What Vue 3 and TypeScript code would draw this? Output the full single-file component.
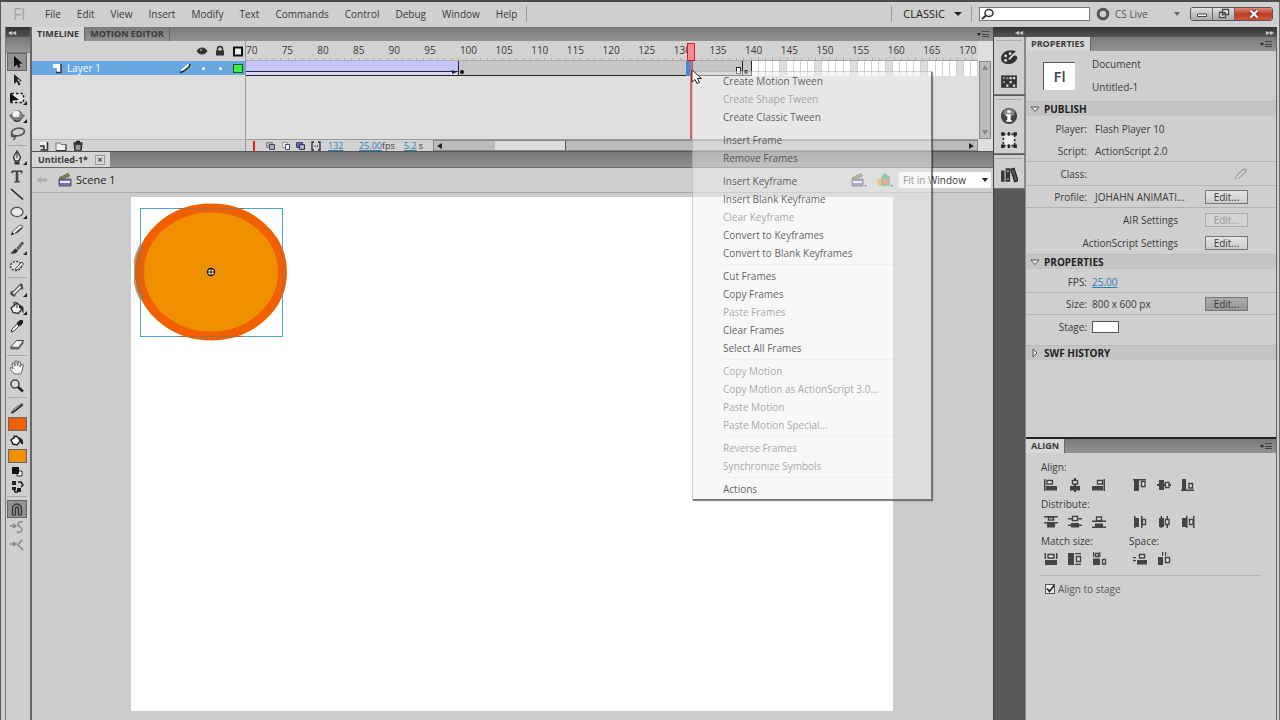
<script setup lang="ts">
import { ref } from 'vue'

interface MenuEntry { label: string; off?: boolean }
interface Tool { name: string; art: string; active?: boolean; more?: boolean }

const menus: string[] = ['File', 'Edit', 'View', 'Insert', 'Modify', 'Text', 'Commands', 'Control', 'Debug', 'Window', 'Help']

const ruler: number[] = Array.from({ length: 21 }, (_, i) => 70 + i * 5)

const contextMenu: MenuEntry[][] = [
  [{ label: 'Create Motion Tween' }, { label: 'Create Shape Tween', off: true }, { label: 'Create Classic Tween' }],
  [{ label: 'Insert Frame' }, { label: 'Remove Frames' }],
  [
    { label: 'Insert Keyframe' },
    { label: 'Insert Blank Keyframe' },
    { label: 'Clear Keyframe', off: true },
    { label: 'Convert to Keyframes' },
    { label: 'Convert to Blank Keyframes' },
  ],
  [
    { label: 'Cut Frames' },
    { label: 'Copy Frames' },
    { label: 'Paste Frames', off: true },
    { label: 'Clear Frames' },
    { label: 'Select All Frames' },
  ],
  [
    { label: 'Copy Motion', off: true },
    { label: 'Copy Motion as ActionScript 3.0...', off: true },
    { label: 'Paste Motion', off: true },
    { label: 'Paste Motion Special...', off: true },
  ],
  [{ label: 'Reverse Frames', off: true }, { label: 'Synchronize Symbols', off: true }],
  [{ label: 'Actions' }],
]

const toolGroups: Tool[][] = [
  [
    { name: 'Selection', active: true, art: '<path d="M5 2v11l3-2.500 1.500 3.500 2-1-1.500-3.200 3.500-.3z" fill="#111"/>' },
    { name: 'Subselection', art: '<path d="M5 2v10l3-2.500 1.500 4 2-1-1.500-3.200 3-.3z" fill="#222"/><path d="M8.500 6.500l2.500 2.300-2 .2z" fill="#fff"/>' },
    { name: 'Free transform', more: true, art: '<path d="M2.500 3.500h12v9h-12z" fill="#e4e4e4" stroke="#222" stroke-width="1.500" stroke-dasharray="2.500 2"/><path d="M1 3v10l3-2.500 6-.5z" fill="#111"/>' },
    { name: '3D rotation', more: true, art: '<circle cx="8" cy="8" r="5.500" fill="#8a8a8a" stroke="#666"/><circle cx="7" cy="6" r="3.500" fill="#f4f4f4"/><path d="M1 6.500c0 5 14 5 14 0" fill="none" stroke="#777" stroke-width="1.800"/><path d="M5 12c2 2 5 1.500 6.500-.5" fill="none" stroke="#333" stroke-width="1.200"/>' },
    { name: 'Lasso', art: '<ellipse cx="9" cy="6" rx="6.500" ry="3.800" fill="none" stroke="#555" stroke-width="1.700" transform="rotate(-10 9 6)"/><path d="M3.500 8c-2 1-1 3 1 2.500s2 1.500 0 3.500" fill="none" stroke="#444" stroke-width="1.400"/>' },
  ],
  [
    { name: 'Pen', more: true, art: '<path d="M8 1l3.500 6-1.500 4h-4l-1.500-4z" fill="#ddd" stroke="#333" stroke-width="1.300"/><path d="M8 2v6" stroke="#222"/><path d="M5.500 12h5v2.500h-5z" fill="#333"/>' },
    { name: 'Text', art: '<path d="M2.500 2.500h11v3h-1.200l-.8-1.500h-2.200v9l1.700.5v1h-6v-1l1.700-.5v-9h-2.200l-.8 1.500h-1.200z" fill="#444"/>' },
    { name: 'Line', art: '<path d="M2 3l12 10.500" stroke="#222" stroke-width="1.500"/>' },
    { name: 'Oval', more: true, art: '<ellipse cx="8" cy="8" rx="6" ry="4.600" fill="#e8e8e8" stroke="#555" stroke-width="1.300"/>' },
    { name: 'Pencil', art: '<path d="M2 13l2-4 7-6 3 1-1 2-8 6z" fill="#eee" stroke="#666"/><path d="M2 13l3-1-1.500-2z" fill="#222"/><path d="M7 11l6-5" stroke="#333" stroke-width="1.500"/>' },
    { name: 'Brush', more: true, art: '<path d="M8 8l5-6 1.500 1-5 6.500z" fill="#777" stroke="#444"/><path d="M1 13c3 0 3-4 6-4.500l2 2c-1 3-5 4-8 2.500z" fill="#333"/>' },
    { name: 'Deco', art: '<ellipse cx="7" cy="8" rx="5.500" ry="4.500" fill="#ddd" stroke="#444" stroke-width="1.500" stroke-dasharray="2 1.300"/><path d="M6 11l7-7 1.500 2-6 6z" fill="#eee" stroke="#444"/>' },
  ],
  [
    { name: 'Bone', more: true, art: '<path d="M4 12l7-7" stroke="#444" stroke-width="4" stroke-linecap="round"/><circle cx="12" cy="3.500" r="2" fill="#555"/><circle cx="13" cy="6" r="1.500" fill="#555"/><circle cx="3" cy="11" r="2" fill="#555"/><circle cx="5" cy="13" r="1.700" fill="#555"/><path d="M4.500 11.500l7-7" stroke="#eee" stroke-width="2"/>' },
    { name: 'Paint bucket', more: true, art: '<path d="M2 8l6-5 6 5-5 5.500-5-1z" fill="#eee" stroke="#333" stroke-width="1.300"/><path d="M5 7V2l3 1v5" fill="none" stroke="#333"/><path d="M10 5c4 0 5 3 4.500 8-2-1-1-4-4.500-5z" fill="#333"/>' },
    { name: 'Eyedropper', art: '<path d="M2 14l1-3 5-5 2 2-5 5z" fill="#eee" stroke="#444"/><path d="M7.500 5l3.500-3 3 0 0 3-3 3.500z" fill="#222"/>' },
    { name: 'Eraser', art: '<path d="M1.500 11l6-6.500h7l-5 7z" fill="#eee" stroke="#444"/><path d="M1.500 11h8v2.500h-8zM9.500 13.500l5-6v-3l-5 7z" fill="#666"/>' },
  ],
  [
    { name: 'Hand', art: '<path d="M5 14c-1-2-4-4-4-6 1-1 2 0 3 1l-1-6 2 0 1 3 0-5h2l.5 5 1-4.500 2 .5-.5 5 2-3 1.500 1c-1 3-1 6-3 9z" fill="#f3f3f3" stroke="#666"/>' },
    { name: 'Zoom', art: '<circle cx="6" cy="6" r="4" fill="#ddd" stroke="#444" stroke-width="1.500"/><path d="M9 9l5 4.500" stroke="#222" stroke-width="2.500"/>' },
  ],
]

const tailTools: Tool[] = [
  { name: 'Snap to objects', active: true, art: '<path d="M3.500 14V8a4.500 5 0 019 0v6M6.500 14V8a1.500 2 0 013 0v6" fill="none" stroke="#333" stroke-width="1.300"/><path d="M3 14h4M9 14h4" stroke="#333"/>' },
  { name: 'Smooth', art: '<path d="M1 7h6M4 5l3 2-3 2M14 3c-6-1-6 3-3 5s3 6-3 5" fill="none" stroke="#888" stroke-width="1.500"/>' },
  { name: 'Straighten', art: '<path d="M1 7h6M4 5l3 2-3 2M13 3l-4 5 5 5" fill="none" stroke="#888" stroke-width="1.500"/>' },
]

const strokeTool = '<path d="M2 13l3-4 7-5 2 0-1 2-8 6z" fill="#eee" stroke="#444"/><path d="M3 13l10-8" stroke="#222" stroke-width="1.500"/>'
const fillTool = '<path d="M2 8l5-4 5 4-4 5-4-1z" fill="#fff" stroke="#222" stroke-width="1.500"/><path d="M5 7V3M10 6c3 0 4 3 3.500 6-2 0-1-3-3.500-4z" stroke="#222" fill="#222"/>'
const defaultColors = '<path d="M8 7h5v5h-5z" fill="#fff" stroke="#333"/><path d="M3 3h7v7h-7z" fill="#111"/>'
const swapColors = '<path d="M3 2h4v4h-4zM8 9h4v4h-4zM3 8h4v3h-4z" fill="#222"/><path d="M9 3h3l2 3-2 2M5 10l1 3h3" fill="none" stroke="#222" stroke-width="1.500"/>'

const docks: { name: string; art: string }[][] = [
  [
    { name: 'Color', art: '<path d="M1 9c0-4 4-7 9-7 5 0 6 3 2 4.500 4 0 4 3 2 5-3 4-13 4-13-2.500z" fill="#333"/><circle cx="5" cy="7" r="1.300" fill="#ddd"/><circle cx="9" cy="5" r="1.300" fill="#ddd"/><circle cx="5" cy="11" r="1.300" fill="#ddd"/><path d="M8 10l6-6" stroke="#eee" stroke-width="1.500"/>' },
    { name: 'Swatches', art: '<path d="M1 3h14v11h-14z" fill="#333"/><path d="M2.500 4.500h2v2h-2zM5.500 4.500h2v2h-2zM2.500 8h2v2h-2z" fill="#888"/><path d="M8.500 4.500h2v2h-2zM11.500 4.500h2v2h-2zM8.500 8h2v2h-2zM5.500 11h2v2h-2zM11.500 11h2v2h-2z" fill="#ddd"/>' },
  ],
  [
    { name: 'Info', art: '<circle cx="8" cy="8" r="7.200" fill="#444"/><ellipse cx="8" cy="5" rx="5" ry="3.500" fill="#888"/><path d="M6.500 3h3v2h-3zM5.500 6.500h4v5h1v1.500h-5v-1.500h1v-3.500h-1z" fill="#fff"/>' },
    { name: 'Transform', art: '<path d="M3 3h10v10h-10z" fill="#eee" stroke="#333" stroke-width="1.500" stroke-dasharray="2 1.500"/><path d="M1 1h3v3h-3zM12 1h3v3h-3zM1 12h3v3h-3zM12 12h3v3h-3zM7 1h2v3h-2zM7 12h2v3h-2z" fill="#222"/>' },
  ],
  [{ name: 'Library', art: '<path d="M1 4h3v10h-3zM5 2h4v12h-4z" fill="#333"/><path d="M9.500 3l3-1 3.500 11-3 1z" fill="#555" stroke="#222"/><path d="M6 4.500h2M6 11.500h2" stroke="#bbb"/>' }],
]

/* Alignment glyphs: one hollow and one solid block against a guide line */
const solid = (d: string) => `<path d="${d}" fill="#444"/>`
const hollow = (d: string) => `<path d="${d}" fill="#e4e4e4" stroke="#444" stroke-width="1.400"/>`
const glyph = {
  left: solid('M1 2h1.500v12h-1.500zM3 9h11v4.500h-11z') + hollow('M4 3.500h5.500v3.500h-5.500z'),
  center: solid('M7 1h2v14h-2zM3 9h10v4.500h-10z') + hollow('M5.500 3.500h5v3.500h-5z'),
  right: solid('M12.500 2h1.500v12h-1.500zM1 9h11v4.500h-11z') + hollow('M6.500 3.500h5v3.500h-5z'),
  top: solid('M1 2h13v1.500h-13zM2 3h5v11h-5z') + hollow('M9.500 4.500h3.500v5h-3.500z'),
  middle: solid('M1 7h14v2h-14zM3 3h5v10h-5z') + hollow('M9.500 5.500h3.500v5h-3.500z'),
  bottom: solid('M1 12.500h13v1.500h-13zM2 2h4v11h-4z') + hollow('M9 6.500h3.500v4.500h-3.500z'),
  dTop: solid('M1 2h14v1.500h-14zM1 8h14v1.500h-14zM4 9h8v4.500h-8z') + hollow('M5.500 3.500h5v2.500h-5z'),
  dMid: solid('M1 4h4v1.500h-4zM11 4h4v1.500h-4zM1 10.500h14v1.500h-14zM4 9h8v4.500h-8z') + hollow('M5.500 2.500h5v4h-5z'),
  dBot: solid('M1 6.500h14v1.500h-14zM1 12.500h14v1.500h-14zM4 9.500h8v4h-8z') + hollow('M5.500 3h5v3.500h-5z'),
  dLeft: solid('M2 2h1.500v12h-1.500zM3 4h4v9h-4zM9 2h1.500v12h-1.500z') + hollow('M10.500 5.500h3v5h-3z'),
  dCen: solid('M4.500 2h1.500v12h-1.500zM3 4h5v9h-5zM10.500 2h1.500v12h-1.500z') + hollow('M9.500 5.500h3.500v5h-3.500z'),
  dRight: solid('M6 2h1.500v12h-1.500zM2 4h4v9h-4zM13 2h1.500v12h-1.500z') + hollow('M9.500 5.500h3.500v5h-3.500z'),
  mW: solid('M1.500 2h1.500v6h-1.500zM13 2h1.500v6h-1.500zM2 9h12v5h-12z') + hollow('M5 3.500h6v3.500h-6z'),
  mH: solid('M1 2h6v12h-6zM8 2h6v1.200h-6zM8 12.800h6v1.200h-6z') + hollow('M9.500 5.500h4v5h-4z'),
  mB: solid('M2 7.500h7v6.500h-7zM2 1h1.200v5h-1.200zM8.300 1h1.200v5h-1.200z') + hollow('M4.500 2.500h3v3h-3zM11.500 8.500h3v4.500h-3z'),
  sV: solid('M5 9h10v4.500h-10zM1 6h3v1.200h-3zM1 9h3v1.200h-3z') + hollow('M7.500 3.500h5v3.500h-5z'),
  sH: solid('M2 6h5v8h-5zM6 1h1.200v4h-1.200zM9 1h1.200v4h-1.200z') + hollow('M9.500 6.500h4v5h-4z'),
}

const alignRows: { label: string; second?: string; a: string[]; b: string[] }[] = [
  { label: 'Align:', a: [glyph.left, glyph.center, glyph.right], b: [glyph.top, glyph.middle, glyph.bottom] },
  { label: 'Distribute:', a: [glyph.dTop, glyph.dMid, glyph.dBot], b: [glyph.dLeft, glyph.dCen, glyph.dRight] },
  { label: 'Match size:', second: 'Space:', a: [glyph.mW, glyph.mH, glyph.mB], b: [glyph.sV, glyph.sH] },
]

const alignToStage = ref(true)
const search = ref('')
</script>

<template>
  <div class="window">
    <header class="menubar">
      <span class="logo">Fl</span>
      <nav class="menus">
        <button v-for="m in menus" :key="m">{{ m }}</button>
      </nav>
      <i class="bar-sep"></i>
      <span class="spacer"></span>
      <i class="bar-sep"></i>
      <button class="workspace">CLASSIC <i class="caret"></i></button>
      <i class="bar-sep"></i>
      <label class="search">
        <svg width="16" height="12" viewBox="0 0 16 12"><ellipse cx="9" cy="5" rx="4" ry="3.500" fill="none" stroke="#333" stroke-width="1.500" /><path d="M6 7.500L2 11" stroke="#333" stroke-width="2" /></svg>
        <input v-model="search" type="text" aria-label="Search" />
      </label>
      <button class="live">
        <svg width="14" height="14" viewBox="0 0 14 14"><circle cx="7" cy="7" r="4.800" fill="none" stroke="#555" stroke-width="3" /></svg>
        <span>CS Live</span><i class="caret pale"></i>
      </button>
      <div class="winbtns">
        <button aria-label="Minimize"><svg width="12" height="10" viewBox="0 0 12 10"><path d="M1.500 5h9v2.500h-9z" fill="#fff" stroke="#444" /></svg></button>
        <button aria-label="Restore"><svg width="14" height="12" viewBox="0 0 14 12"><path d="M5.500 1.500h6v5h-6zM2.500 4.500h6v5h-6z" fill="#fff" stroke="#444" stroke-width="1.300" /><path d="M4.500 6.500h2v1h-2z" fill="#444" /></svg></button>
        <button class="close" aria-label="Close"><svg width="12" height="10" viewBox="0 0 12 10"><path d="M2.500 1.500l7 7M9.500 1.500l-7 7" stroke="#633" stroke-width="4" /><path d="M2.500 1.500l7 7M9.500 1.500l-7 7" stroke="#fff" stroke-width="2.200" /></svg></button>
      </div>
    </header>

    <div class="workarea">
      <aside class="tools">
        <div class="collapse"><span>◂◂</span></div>
        <div class="grip"></div>
        <div v-for="(g, gi) in toolGroups" :key="gi" class="toolgroup">
          <button v-for="t in g" :key="t.name" :class="{ active: t.active, more: t.more }" :aria-label="t.name">
            <svg width="16" height="16" viewBox="0 0 16 16" v-html="t.art"></svg>
          </button>
        </div>
        <div class="toolgroup colors">
          <svg width="16" height="16" viewBox="0 0 16 16" v-html="strokeTool"></svg>
          <button class="swatch stroke" aria-label="Stroke color"></button>
          <svg width="16" height="16" viewBox="0 0 16 16" v-html="fillTool"></svg>
          <button class="swatch fill" aria-label="Fill color"></button>
          <button class="mini" aria-label="Black and white"><svg width="16" height="16" viewBox="0 0 16 16" v-html="defaultColors"></svg></button>
          <button class="mini" aria-label="Swap colors"><svg width="16" height="16" viewBox="0 0 16 16" v-html="swapColors"></svg></button>
        </div>
        <div class="toolgroup">
          <button v-for="t in tailTools" :key="t.name" :class="{ active: t.active }" :aria-label="t.name">
            <svg width="16" height="16" viewBox="0 0 16 16" v-html="t.art"></svg>
          </button>
        </div>
      </aside>

      <main class="centre">
        <div class="tabs">
          <button class="tab on">TIMELINE</button>
          <button class="tab">MOTION EDITOR</button>
          <span class="spacer"></span>
          <button class="panelmenu" aria-label="Panel menu"><i class="caret"></i><i class="lines"></i></button>
        </div>

        <section class="timeline">
          <div class="layers">
            <div class="layerhead">
              <svg width="14" height="12" viewBox="0 0 14 12"><path d="M2 6c2-4 8-4 10 0-2 4-8 4-10 0z" fill="#333" stroke="#333" /><circle cx="6" cy="5" r="1" fill="#aaa" /></svg>
              <svg width="14" height="12" viewBox="0 0 14 12"><path d="M4.500 6V4a2.500 2.500 0 015 0v2" fill="none" stroke="#333" stroke-width="1.500" /><path d="M3 5.500h8v5h-8z" fill="#333" /></svg>
              <svg width="14" height="12" viewBox="0 0 14 12"><path d="M3 2.500h8v8h-8z" fill="#eee" stroke="#111" stroke-width="2" /></svg>
            </div>
            <div class="layer">
              <svg width="12" height="12" viewBox="0 0 12 12"><path d="M2 2h8v8h-4v-4h-4z" fill="#fff" /><path d="M10 2v8.500h-5" fill="none" stroke="#333" stroke-width="1.500" /></svg>
              <span class="lname">Layer 1</span>
              <svg width="14" height="12" viewBox="0 0 14 12"><path d="M2.500 10l1-2.500 6-5.500h2.500l-1 3-6 4.500z" fill="#fff" /><path d="M2 10.500l3-1 6-4.500 1-3" fill="none" stroke="#222" stroke-width="1.500" /></svg>
              <i class="dot"></i><i class="dot"></i>
              <i class="outline"></i>
            </div>
            <div class="blank"></div>
            <div class="layerfoot">
              <button aria-label="New layer"><svg width="12" height="12" viewBox="0 0 12 12"><path d="M2 2h8v8h-4v-4h-4z" fill="#eee" /><path d="M9.500 2v8h-7M2 6h4v4" fill="none" stroke="#333" stroke-width="1.500" /></svg></button>
              <button aria-label="New folder"><svg width="12" height="12" viewBox="0 0 12 12"><path d="M1 3h4l1 1.500h5v6h-10z" fill="#eee" stroke="#777" /><path d="M1 10.500h10v-6" fill="none" stroke="#333" /></svg></button>
              <button aria-label="Delete"><svg width="12" height="12" viewBox="0 0 12 12"><path d="M2 4h8l-1 7h-6z" fill="#666" stroke="#222" /><path d="M1.500 3h9M4 1.500h4" stroke="#222" stroke-width="1.500" /><path d="M5 5v5M7 5v5" stroke="#ccc" /></svg></button>
            </div>
          </div>

          <div class="frames">
            <div class="ruler"><span v-for="n in ruler" :key="n">{{ n }}</span></div>
            <div class="track">
              <div class="span tween"><svg width="8" height="8" viewBox="0 0 8 8"><path d="M2 2l5 2-5 2z" fill="#223" /></svg></div>
              <div class="span hold"><i class="key"></i></div>
              <div class="span picked"></div>
              <div class="span rest"><i class="endbox"></i></div>
              <div class="span last"><i class="key"></i></div>
              <div class="span empty"><i v-for="n in 32" :key="n" :class="{ fifth: n % 5 === 0 }"></i></div>
            </div>
            <div class="blank"></div>
            <div class="status">
              <svg width="90" height="12" viewBox="0 0 90 12">
                <path d="M8 1v10" stroke="#e02020" stroke-width="2" />
                <path d="M20.500 2.500h6v5h-6z" fill="#aaa" stroke="#888" /><path d="M23.500 4.500h5v5h-5z" fill="#aab" stroke="#446" />
                <path d="M36.500 2.500h5v5h-5z" fill="#eee" stroke="#999" /><path d="M39.500 4.500h4v5h-4z" fill="#fff" stroke="#446" />
                <path d="M50.500 2.500h6v5h-6z" fill="#66a" stroke="#448" /><path d="M53.500 4.500h5v5h-5z" fill="#aac" stroke="#336" />
                <path d="M68 2h-2v8h2M72 2h2v8h-2M68.500 6h1M71 6h1" fill="none" stroke="#223" stroke-width="1.300" />
              </svg>
              <a href="#" class="num frame">132</a>
              <span class="rate"><a href="#" class="num">25.00</a>fps</span>
              <span class="time"><a href="#" class="num">5.2</a>s</span>
              <div class="hscroll"><i class="tri l"></i><i class="thumb"></i><i class="tri r"></i></div>
            </div>
            <div class="playhead"><i class="head"></i><i class="needle"></i></div>
          </div>

          <div class="vscroll"><i class="tri up"></i><i class="tri down"></i></div>
        </section>

        <div class="doctabs">
          <div class="doctab">Untitled-1* <button aria-label="Close document">×</button></div>
        </div>

        <div class="scenebar">
          <svg width="14" height="12" viewBox="0 0 14 12"><path d="M1 6l5-4v2.500h6v3h-6v2.500z" fill="#b0b0b0" /></svg>
          <svg class="clap" width="16" height="16" viewBox="0 0 16 16"><path d="M2 6l9-4.500 1.500 2.500-9 3.500z" fill="#8d8730" stroke="#665" /><path d="M2 7h12v7h-12z" fill="#77a" stroke="#557" /><path d="M3 9h10v2h-10z" fill="#eef" /></svg>
          <span class="scene">Scene 1</span>
          <span class="spacer"></span>
          <button aria-label="Edit scene"><svg width="18" height="16" viewBox="0 0 18 16"><path d="M2 6l9-4.500 1.500 2.500-9 3.500z" fill="#8d8730" stroke="#554" /><path d="M2 7h11v7h-11z" fill="#66a" stroke="#446" /><path d="M3 9h9v2h-9z" fill="#eef" /><path d="M14 13h3l-1.500 2z" fill="#333" /></svg></button>
          <button aria-label="Edit symbols"><svg width="18" height="16" viewBox="0 0 18 16"><path d="M3 9l5-8 6 4z" fill="#2f9c40" /><circle cx="5" cy="10" r="4" fill="#f0972a" /><path d="M6 6h7v7h-7z" fill="#e8603a" stroke="#2a9f60" stroke-width="1.500" /><path d="M14 13h3l-1.500 2z" fill="#333" /></svg></button>
          <select aria-label="Zoom"><option>Fit in Window</option></select>
          <i class="caret over"></i>
        </div>

        <section class="pasteboard">
          <div class="stage">
            <svg class="shape" width="154" height="140" viewBox="0 0 154 140">
              <ellipse cx="77" cy="70" rx="71.500" ry="64" fill="#f09000" stroke="#f06000" stroke-width="9" />
              <path d="M7.500 44A71.500 64 0 007.500 96" fill="none" stroke="#b06838" stroke-width="5" opacity=".7" />
              <rect x="6.500" y="6.500" width="142" height="128" fill="none" stroke="#4aa6cc" />
              <path d="M44 6.500h66M44 134.500h66M6.500 48v44M148.500 48v44" stroke="#a07048" />
              <circle cx="77" cy="70" r="3.500" fill="#fff" stroke="#111" stroke-width="1.300" /><path d="M73 70h8M77 67v6" stroke="#111" />
            </svg>
          </div>
        </section>
      </main>

      <div class="right">
        <div class="darkstrip"><span class="a">◂◂</span><span class="b">▸▸</span></div>
        <div class="rightcols">
          <div class="dock">
            <div v-for="(d, di) in docks" :key="di" class="dockgroup">
              <button v-for="i in d" :key="i.name" :aria-label="i.name"><svg width="18" height="18" viewBox="0 0 16 16" v-html="i.art"></svg></button>
            </div>
          </div>
          <div class="panels">
            <section class="props">
              <div class="tabs">
                <button class="tab on">PROPERTIES</button><span class="spacer"></span>
                <button class="panelmenu" aria-label="Panel menu"><i class="caret"></i><i class="lines"></i></button>
              </div>
              <div class="doc">
                <span class="badge">Fl</span>
                <div><p>Document</p><p>Untitled-1</p></div>
              </div>
              <h3><svg width="10" height="8" viewBox="0 0 10 8"><path d="M1 2h8l-4 4.500z" fill="#eee" stroke="#555" /></svg>PUBLISH</h3>
              <div class="body">
                <div class="row"><span class="k">Player:</span><span>Flash Player 10</span></div>
                <div class="row line"><span class="k">Script:</span><span>ActionScript 2.0</span></div>
                <div class="row tall line"><label class="k" for="cls">Class:</label><input id="cls" type="text" class="cls" />
                  <svg width="14" height="14" viewBox="0 0 14 14"><path d="M1 12l2-4 6-6h3l0 3-7 6z" fill="#bbb" stroke="#999" /><path d="M2 12l8-8" stroke="#eee" /></svg></div>
                <div class="row line"><span class="k">Profile:</span><span class="grow">JOHAHN ANIMATI...</span><button class="edit">Edit...</button></div>
                <div class="row tall"><span class="wide">AIR Settings</span><button class="edit" disabled>Edit...</button></div>
                <div class="row"><span class="wide">ActionScript Settings</span><button class="edit">Edit...</button></div>
              </div>
              <h3><svg width="10" height="8" viewBox="0 0 10 8"><path d="M1 2h8l-4 4.500z" fill="#eee" stroke="#555" /></svg>PROPERTIES</h3>
              <div class="body second">
                <div class="row line"><span class="k">FPS:</span><a href="#" class="num">25.00</a></div>
                <div class="row line"><span class="k">Size:</span><span class="grow">800 x 600 px</span><button class="edit dark">Edit...</button></div>
                <div class="row tall"><span class="k">Stage:</span><button class="stagecolor" aria-label="Stage color"></button></div>
              </div>
              <h3 class="closed"><svg width="10" height="10" viewBox="0 0 10 10"><path d="M3 1v8l4-4z" fill="#eee" stroke="#555" /></svg>SWF HISTORY</h3>
            </section>

            <section class="align">
              <div class="tabs">
                <button class="tab on">ALIGN</button><span class="spacer"></span>
                <button class="panelmenu" aria-label="Panel menu"><i class="caret"></i><i class="lines"></i></button>
              </div>
              <div class="alignbody">
                <div v-for="r in alignRows" :key="r.label" class="arow">
                  <div class="labels"><span>{{ r.label }}</span><span>{{ r.second }}</span></div>
                  <div class="icons">
                    <div><button v-for="(g, i) in r.a" :key="i" :aria-label="r.label + i"><svg width="16" height="16" viewBox="0 0 16 16" v-html="g"></svg></button></div>
                    <div><button v-for="(g, i) in r.b" :key="i" :aria-label="r.label + (i + 3)"><svg width="16" height="16" viewBox="0 0 16 16" v-html="g"></svg></button></div>
                  </div>
                </div>
                <label class="tostage">
                  <span class="box">
                    <input v-model="alignToStage" type="checkbox" />
                    <svg v-if="alignToStage" width="10" height="10" viewBox="0 0 10 10"><path d="M2 4.500l2.500 3 4.500-6" fill="none" stroke="#222" stroke-width="1.700" /></svg>
                  </span>Align to stage
                </label>
              </div>
            </section>
          </div>
        </div>
      </div>
    </div>

    <div class="context" role="menu">
      <div v-for="(g, gi) in contextMenu" :key="gi" class="cgroup">
        <button v-for="e in g" :key="e.label" role="menuitem" :disabled="e.off">{{ e.label }}</button>
      </div>
    </div>
    <svg class="pointer" width="14" height="18" viewBox="0 0 14 18"><path d="M1 1v12l3-2.500 2 4 2.500-1-2-4h4z" fill="#fff" stroke="#222" /></svg>
  </div>
</template>

<style>
body { background: #cfcfcf; }
</style>

<style scoped>
* { box-sizing: border-box; }
.window {
  position: relative;
  display: flex;
  flex-direction: column;
  min-height: 100vh;
  padding: 0 2px 0 4px;
  border-top: 2px solid #51484c;
  border-left: 1px solid #5c5659;
  border-right: 1px solid #6b6b6b;
  background: #cfcfcf;
  color: #3a3a3a;
  font: 10px/14px "Open Sans", "Noto Sans", sans-serif;
  overflow: hidden;
}
button, input, select { font: inherit; color: inherit; margin: 0; padding: 0; border: 0; background: none; }
button { display: block; }
svg { display: block; flex: none; }
p, h3 { margin: 0; }
.spacer { flex: 1; }
.caret { display: block; border: 4px solid transparent; border-top-color: #222; border-bottom: 0; }
.caret.pale { border-top-color: #666; border-width: 4px 3px 0; }

.menubar { display: flex; align-items: center; height: 25px; padding-bottom: 1px; }
.logo { width: 40px; padding-left: 8px; font-size: 16px; line-height: 22px; color: #a2a2a2; }
.menus { display: flex; gap: 16px; margin-right: 9px; }
.bar-sep { width: 1px; height: 16px; background: #999; }
.workspace { display: flex; align-items: center; gap: 9px; padding: 0 9px 0 11px; font-size: 11px; color: #222; }
.search { display: flex; align-items: center; width: 111px; height: 14px; margin: 0 6px 0 7px; border: 1px solid #777; background: #fff; }
.search input { flex: 1; min-width: 0; outline: 0; }
.live { display: flex; align-items: center; gap: 5px; width: 84px; color: #555; }
.live .caret { margin-left: auto; }
.winbtns { display: flex; margin: 0 4px 0 10px; border: 1px solid #555; border-radius: 3px; overflow: hidden; }
.winbtns button { display: flex; align-items: center; justify-content: center; width: 22px; height: 12px; border-right: 1px solid #666; background: linear-gradient(#ddd, #aaa); }
.winbtns .close { width: 37px; border: 0; background: linear-gradient(#e08a7c, #c03a22 50%, #d2553c); }

.workarea { display: flex; flex: 1; }
.tools { width: 25px; border-left: 1px solid #777; background: #cfcfcf; }
.collapse, .darkstrip { height: 10px; background: linear-gradient(#333, #555); color: #ccc; font-size: 8px; line-height: 10px; }
.collapse { padding-left: 2px; }
.grip { height: 16px; border-bottom: 1px solid #777; background: linear-gradient(#777, #999); }
.toolgroup { display: flex; flex-direction: column; align-items: center; margin: 0 3px 0 1px; padding-bottom: 2px; border-bottom: 1px solid #aaa; }
.toolgroup + .toolgroup { padding-top: 3px; }
.toolgroup:last-child { border: 0; }
.toolgroup button { position: relative; display: flex; align-items: center; justify-content: center; width: 20px; height: 18px; }
.toolgroup button.active { border: 1px solid #666; background: #929292; }
.toolgroup button.more::after { content: ""; position: absolute; right: 0; bottom: 2px; border: 2px solid transparent; border-right-color: #222; border-bottom-color: #222; }
.toolgroup .swatch { height: 14px; margin: 1px 0; border: 1px solid #667; width: 19px; }
.toolgroup .mini { height: 15px; }
.toolgroup.colors { padding-top: 2px; }
.stroke { background: #f06000; }
.fill { background: #f09000; }

.centre { display: flex; flex: 1; flex-direction: column; min-width: 0; margin: 0; border-left: 2px solid #666; }
.tabs { display: flex; height: 14px; background: linear-gradient(#7b7b7b, #929292); }
.tab { padding: 0 5px; border-right: 1px solid #666; font-size: 9px; font-weight: 700; line-height: 14px; color: #3a3a3a; }
.tab.on { background: #d6d6d6; }
.panelmenu { display: flex; align-items: center; gap: 1px; padding-right: 4px; }
.panelmenu .caret { border-width: 3px 2px 0; }
.lines { width: 7px; height: 6px; border-top: 1px solid #444; border-bottom: 1px solid #444; background: linear-gradient(transparent 2px, #444 2px, #444 3px, transparent 3px); }

.timeline { display: flex; height: 110px; background: #dedede; }
.layers { display: flex; flex-direction: column; width: 214px; border-right: 1px solid #999; }
.layerhead { display: flex; align-items: center; justify-content: flex-end; gap: 4px; height: 20px; background: #d2d2d2; }
.layer { display: flex; align-items: center; height: 14px; padding: 0 2px 0 19px; background: #68a8e0; color: #fff; }
.lname { flex: 1; padding-left: 4px; }
.dot { width: 3px; height: 3px; margin-left: 10px; border-radius: 50%; background: #fff; }
.dot + .dot { margin-left: 14px; }
.outline { width: 10px; height: 9px; margin-left: 11px; border: 1px solid #175a17; background: #40f040; }
.blank { flex: 1; }
.layerfoot { display: flex; align-items: center; gap: 5px; height: 12px; padding-left: 6px; border-top: 1px solid #b5b5b5; background: #d2d2d2; }

.frames { position: relative; display: flex; flex: 1; flex-direction: column; min-width: 0; }
.ruler { display: grid; grid-template-columns: repeat(20, minmax(0, 1fr)) 19px; height: 20px; padding-top: 2px; border-bottom: 1px solid #aaa; background: #d2d2d2; line-height: 15px; }
.ruler span { height: 17px; background: repeating-linear-gradient(90deg, transparent 0 6px, #aaa 6px 7px) bottom / 100% 2px no-repeat; }
.track { display: flex; height: 15px; }
.span { position: relative; border-bottom: 1px solid #222; min-width: 0; }
.tween { display: flex; flex: 30 1 0; align-items: flex-end; justify-content: flex-end; border-right: 1px solid #224; background: linear-gradient(#c4c4f6, #c4c4f6) top / 100% 10px no-repeat, linear-gradient(#224, #224) 0 10px / 100% 1px no-repeat, #d8d8f8; }
.tween svg { margin-bottom: -1px; }
.hold { flex: 32 1 0; background: #c6c6c6; }
.key { position: absolute; bottom: 1px; left: 1px; width: 4px; height: 4px; border-radius: 50%; background: #111; }
.picked { flex: 1 1 0; background: #4288d4; border: 0; }
.rest { flex: 7 1 0; border-right: 1px solid #222; background: #c6c6c6; }
.endbox { position: absolute; right: 1px; bottom: 1px; width: 5px; height: 7px; border: 1px solid #222; background: #fff; }
.last { flex: 1 1 0; border-right: 1px solid #222; background: #c6c6c6; }
.empty { display: flex; flex: 32 1 0; border: 0; background: #fff; }
.empty i { flex: 1; border-right: 1px solid #d0d0d0; }
.empty .fifth { background: #ddd; }
.status { display: flex; align-items: center; height: 12px; border-top: 1px solid #999; background: #d2d2d2; font-size: 9px; line-height: 11px; }
.num { color: #2c7fb2; text-decoration: underline; }
.status > svg { margin-right: -8px; }
.frame { width: 31px; }
.rate { width: 45px; }
.time { width: 29px; }
.time .num { margin-right: 2px; }
.hscroll { display: flex; flex: 1; align-items: center; justify-content: space-between; height: 11px; padding: 0 3px; border: 1px solid #888; background: #bcbcbc; }
.thumb { width: 71px; height: 9px; margin-left: 53px; margin-right: auto; border-right: 1px solid #555; background: #ddd; }
.tri { border: 3px solid transparent; }
.tri.l { border-left: 0; border-right: 5px solid #222; }
.tri.r { border-right: 0; border-left: 5px solid #222; }
.tri.up { border-top: 0; border-bottom: 5px solid #888; }
.tri.down { border-bottom: 0; border-top: 5px solid #888; }
.playhead { position: absolute; top: 2px; left: calc(62 / 103 * 100%); width: 8px; bottom: 12px; }
.head { display: block; height: 18px; border: 1px solid #c22; background: #f68a94; }
.needle { display: block; width: 2px; height: calc(100% - 18px); margin-left: 3px; background: #d86464; }
.vscroll { display: flex; flex-direction: column; align-items: center; justify-content: space-between; width: 12px; margin: 20px 2px 12px 1px; padding: 3px 0; border: 1px solid #888; background: #bcbcbc; }

.doctabs { height: 17px; border-top: 1px solid #555; border-bottom: 1px solid #666; background: linear-gradient(#777, #919191); }
.doctab { display: flex; align-items: center; justify-content: space-between; width: 78px; height: 15px; padding: 0 5px 0 6px; background: #d6d6d6; font-size: 9px; font-weight: 700; }
.doctab button { width: 10px; height: 10px; border: 1px solid #999; font-size: 9px; line-height: 8px; }
.scenebar { position: relative; display: flex; align-items: center; height: 25px; padding: 0 2px 1px 3px; border-bottom: 1px solid #aaa; background: #cfcfcf; }
.clap { margin-left: 8px; }
.scene { padding-left: 3px; font-size: 11px; color: #222; }
.scenebar button { margin-right: 8px; }
.scenebar button + button { margin-right: 5px; }
.scenebar select { width: 92px; height: 16px; padding-left: 4px; appearance: none; background: #fff; }
.over { position: absolute; right: 5px; top: 10px; border-width: 4px 3px 0; pointer-events: none; }
.pasteboard { display: flex; flex: 1; padding: 4px 100px 9px 99px; background: #cbcbcb; }
.stage { position: relative; flex: 1; background: #fff; }
.shape { position: absolute; left: 3px; top: 5px; }

.right { display: flex; flex-direction: column; width: 284px; border-left: 1px solid #444; }
.darkstrip { display: flex; justify-content: space-between; padding-right: 3px; }
.darkstrip .a { padding-left: 21px; }
.rightcols { display: flex; flex: 1; }
.dock { width: 31px; background: #585858; }
.dockgroup { display: flex; flex-direction: column; align-items: center; gap: 6px; margin-bottom: 1px; padding: 11px 0 4px; border-right: 1px solid #888; border-bottom: 1px solid #777; background: linear-gradient(#aaa, #aaa) 50% 3px / 26px 1px no-repeat, #cfcfcf; }
.panels { display: flex; flex: 1; flex-direction: column; min-width: 0; border-right: 1px solid #666; border-left: 1px solid #888; }
.props { min-height: 402px; border-bottom: 2px solid #222; }
.doc { display: flex; align-items: center; height: 50px; padding-left: 17px; }
.doc p { line-height: 23px; padding-left: 17px; }
.badge { width: 32px; height: 28px; border: 1px solid #555; border-right: 0; border-bottom: 0; background: #fff; font-size: 15px; font-weight: 600; line-height: 26px; text-align: center; color: #444; }
h3 { display: flex; align-items: center; gap: 4px; height: 15px; padding-left: 4px; border-top: 1px solid #bbb; background: #c4c4c4; font-size: 10px; font-weight: 700; line-height: 12px; color: #222; }
.closed { margin-top: 6px; }
.body { padding-top: 2px; }
.row { display: flex; align-items: center; height: 22px; padding-right: 28px; }
.row.tall { height: 24px; }
.row.line { border-bottom: 1px solid #b2b2b2; }
.k { width: 61px; margin-right: 8px; text-align: right; }
.second .k { margin-right: 5px; }
.cls { flex: 1; min-width: 0; outline: 0; }
.grow { flex: 1; }
.wide { flex: 1; padding-right: 27px; text-align: right; }
.edit { width: 43px; height: 14px; border: 1px solid #777; background: linear-gradient(#e4e4e4, #ccc); line-height: 12px; }
.edit:disabled { border-color: #aaa; color: #999; background: #d4d4d4; }
.edit.dark { background: linear-gradient(#aaa, #999); }
.stagecolor { width: 27px; height: 12px; border: 1px solid #555; background: #fff; }
.alignbody { padding: 7px 15px; }
.labels { display: flex; height: 17px; line-height: 15px; }
.labels span { width: 88px; }
.arow { height: 37px; }
.icons { display: flex; padding-left: 2px; }
.icons div { display: flex; gap: 8px; width: 89px; }
.tostage { display: flex; align-items: center; gap: 3px; margin-top: 4px; padding: 6px 0 0 4px; border-top: 1px solid #b2b2b2; color: #555; }
.box { position: relative; width: 10px; height: 10px; }
.box input { display: block; width: 10px; height: 10px; appearance: none; border: 1px solid #555; background: #eee; }
.box svg { position: absolute; left: 0; top: 0; pointer-events: none; }

/* The menu is caught mid fade-in, so what lies below shows through */
.context { position: absolute; left: 691px; top: 69px; width: 240px; padding: 0 0 1px 30px; border: 1px solid rgba(120, 120, 120, .3); border-right: 1px solid #777; border-bottom: 1px solid #777; background: rgba(240, 240, 240, .5); box-shadow: 1px 1px 1px rgba(0, 0, 0, .45); }
.cgroup + .cgroup { margin-top: 2px; padding-top: 2px; border-top: 1px solid rgba(210, 210, 210, .25); }
.context button { width: 100%; height: 18px; line-height: 17px; text-align: left; color: rgba(50, 50, 50, .78); }
.context button:disabled { color: rgba(110, 110, 110, .6); }
.pointer { position: absolute; left: 690px; top: 67px; }
</style>
